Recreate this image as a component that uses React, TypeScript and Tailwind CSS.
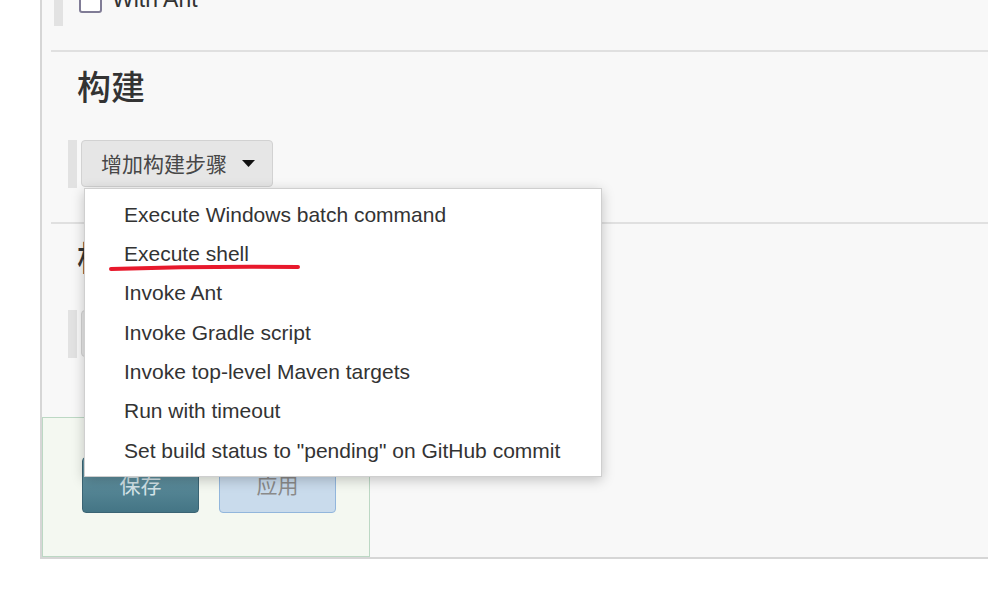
import React from "react";

const cjk = { fontFamily: '"Noto Sans CJK SC", "Noto Sans", sans-serif' };
const latin = { fontFamily: '"Liberation Sans", Arial, "Noto Sans CJK SC", sans-serif' };

const items = [
  "Execute Windows batch command",
  "Execute shell",
  "Invoke Ant",
  "Invoke Gradle script",
  "Invoke top-level Maven targets",
  "Run with timeout",
  'Set build status to "pending" on GitHub commit',
];

function Caret() {
  return (
    <svg width="13" height="7" viewBox="0 0 13 7" className="ml-[15px]">
      <path d="M0 0 L13 0 L6.5 7 Z" fill="#111" />
    </svg>
  );
}

function StepButton({ label, children }: { label: string; children?: React.ReactNode }) {
  return (
    <div className="flex items-start pl-[17px]">
      <div className="w-[9px] h-[48px] bg-[#e2e2e2]" />
      <div className="relative ml-[4px]">
        <div
          className="h-[47px] pl-[19px] pr-[17px] flex items-center rounded-[4px] border border-[#d2d2d2] bg-[#e6e6e6] text-[21px] text-[#474747]"
          style={cjk}
        >
          {label}
          <Caret />
        </div>
        {children}
      </div>
    </div>
  );
}

export default function App() {
  return (
    <div className="w-[988px] h-[604px] bg-white overflow-hidden" style={latin}>
      <div className="ml-[40px] h-[559px] border-l-2 border-b-2 border-[#d6d6d6] bg-[#f8f8f8] flex flex-col">
        <div className="pl-[9px]">
          {/* Section 1 (partially visible) */}
          <div className="h-[52px] border-b-2 border-[#e0e0e0] flex items-start pl-[3px]">
            <div className="w-[9px] h-[26px] bg-[#e2e2e2]" />
            <div className="ml-[16px] -mt-[14px] flex items-center">
              <div className="w-[23px] h-[23px] rounded-[3px] border-2 border-[#807c96] bg-white" />
              <span className="ml-[10px] text-[23px] text-[#333] -mt-[4px]">With Ant</span>
            </div>
          </div>

          {/* Section 2: 构建 */}
          <div className="border-b-2 border-[#e0e0e0] pb-[34px]">
            <div className="mt-[15px] pl-[26px] h-[38px] leading-[38px] text-[34px] font-medium text-[#333]" style={cjk}>
              构建
            </div>
            <div className="mt-[35px]">
              <StepButton label="增加构建步骤">
                <div className="absolute left-[3px] top-[48px] w-[518px] z-10 bg-white border border-[#cfcfcf] shadow-[0_3px_12px_rgba(0,0,0,0.22)] py-[6px]">
                  {items.map((t) => (
                    <div key={t} className="h-[39.3px] flex items-center pl-[39px] text-[21px] text-[#333] whitespace-nowrap">
                      {t}
                    </div>
                  ))}
                  <svg className="absolute left-0 top-0" width="260" height="100" viewBox="0 0 260 100">
                    <path d="M26 80 Q 120 77 213 78" stroke="#e8192c" strokeWidth="4" strokeLinecap="round" fill="none" />
                  </svg>
                </div>
              </StepButton>
            </div>
          </div>

          {/* Section 3: 构建后操作 */}
          <div>
            <div className="mt-[14px] pl-[26px] h-[38px] leading-[38px] text-[34px] font-medium text-[#333]" style={cjk}>
              构建后操作
            </div>
            <div className="mt-[34px]">
              <StepButton label="增加构建后操作步骤" />
            </div>
          </div>
        </div>

        {/* Bottom sticker */}
        <div className="mt-auto w-[328px] h-[140px] border border-[#bcd8c4] bg-[#f4f8f1] pt-[39px] pl-[39px] flex items-start gap-[20px]">
          <div
            className="w-[117px] h-[56px] rounded-[4px] border border-[#3a6474] bg-gradient-to-b from-[#6c9caa] to-[#447585] flex items-center justify-center text-[21px] text-[#d3e3e8]"
            style={cjk}
          >
            保存
          </div>
          <div
            className="w-[117px] h-[56px] rounded-[4px] border border-[#92b6dc] bg-[#c9dbec] flex items-center justify-center text-[21px] text-[#8a8a8a]"
            style={cjk}
          >
            应用
          </div>
        </div>
      </div>
    </div>
  );
}
